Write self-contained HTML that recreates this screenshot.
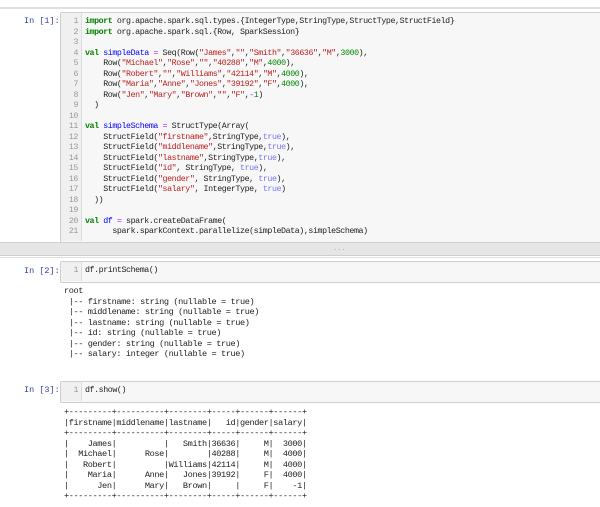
<!DOCTYPE html>
<html><head><meta charset="utf-8"><style>
body{margin:0;width:600px;height:507px;background:#fff;position:relative;overflow:hidden;font-family:"DejaVu Sans Mono","Liberation Mono",monospace;}
.a{position:absolute}
pre{margin:0;font-family:"Liberation Mono",monospace;font-size:8.3px;letter-spacing:-0.42px;line-height:10.5px;color:#222;}
pre.out{font-size:8.6px;letter-spacing:-0.4px}
.p{color:#303F9F;font-size:8.5px;font-family:"Liberation Mono",monospace}
.box{background:#f7f7f7;border:1px solid #cfcfcf;border-radius:2px}
.g{background:#f0f0f0;border-right:1px solid #ddd}
.k{color:#008000;font-weight:bold}.s{color:#BA2121}.n{color:#080}.v{color:#0000ff}.o{color:#AA22FF}.t{color:#7777ee}
.ln{color:#999;text-align:right}
</style></head><body>
<div class="a" style="left:0;top:7px;width:600px;height:2px;background:#e0e0e0"></div>
<div class="a p" style="left:24px;top:16px">In [1]:</div>
<div class="a box" style="left:60px;top:12px;width:545px;height:229px"></div>
<div class="a g" style="left:61px;top:13px;width:20px;height:228px"></div>
<pre class="a ln" style="left:61px;top:17px;width:17px">1
2
3
4
5
6
7
8
9
10
11
12
13
14
15
16
17
18
19
20
21</pre>
<pre class="a" style="left:85px;top:17px"><span class="k">import</span> org.apache.spark.sql.types.{IntegerType,StringType,StructType,StructField}
<span class="k">import</span> org.apache.spark.sql.{Row, SparkSession}

<span class="k">val</span> <span class="v">simpleData</span> <span class="o">=</span> Seq(Row(<span class="s">"James"</span>,<span class="s">""</span>,<span class="s">"Smith"</span>,<span class="s">"36636"</span>,<span class="s">"M"</span>,<span class="n">3000</span>),
    Row(<span class="s">"Michael"</span>,<span class="s">"Rose"</span>,<span class="s">""</span>,<span class="s">"40288"</span>,<span class="s">"M"</span>,<span class="n">4000</span>),
    Row(<span class="s">"Robert"</span>,<span class="s">""</span>,<span class="s">"Williams"</span>,<span class="s">"42114"</span>,<span class="s">"M"</span>,<span class="n">4000</span>),
    Row(<span class="s">"Maria"</span>,<span class="s">"Anne"</span>,<span class="s">"Jones"</span>,<span class="s">"39192"</span>,<span class="s">"F"</span>,<span class="n">4000</span>),
    Row(<span class="s">"Jen"</span>,<span class="s">"Mary"</span>,<span class="s">"Brown"</span>,<span class="s">""</span>,<span class="s">"F"</span>,<span class="o">-</span><span class="n">1</span>)
  )

<span class="k">val</span> <span class="v">simpleSchema</span> <span class="o">=</span> StructType(Array(
    StructField(<span class="s">"firstname"</span>,StringType,<span class="t">true</span>),
    StructField(<span class="s">"middlename"</span>,StringType,<span class="t">true</span>),
    StructField(<span class="s">"lastname"</span>,StringType,<span class="t">true</span>),
    StructField(<span class="s">"id"</span>, StringType, <span class="t">true</span>),
    StructField(<span class="s">"gender"</span>, StringType, <span class="t">true</span>),
    StructField(<span class="s">"salary"</span>, IntegerType, <span class="t">true</span>)
  ))

<span class="k">val</span> <span class="v">df</span> <span class="o">=</span> spark.createDataFrame(
      spark.sparkContext.parallelize(simpleData),simpleSchema)</pre>
<div class="a" style="left:0;top:242px;width:600px;height:12px;background:#e6e6e6;border-top:1px solid #cfcfcf;border-bottom:1px solid #cfcfcf"></div>
<div class="a" style="left:333px;top:244px;font-size:7px;color:#aaa">...</div>
<div class="a" style="left:0;top:257px;width:600px;height:1px;background:#e0e0e0"></div>
<div class="a p" style="left:24px;top:266px">In [2]:</div>
<div class="a box" style="left:60px;top:261px;width:545px;height:20px"></div>
<div class="a g" style="left:61px;top:262px;width:20px;height:19px"></div>
<pre class="a ln" style="left:61px;top:266px;width:17px">1</pre>
<pre class="a" style="left:85px;top:266px">df.printSchema()</pre>
<pre class="a out" style="left:64px;top:286px">root
 |-- firstname: string (nullable = true)
 |-- middlename: string (nullable = true)
 |-- lastname: string (nullable = true)
 |-- id: string (nullable = true)
 |-- gender: string (nullable = true)
 |-- salary: integer (nullable = true)</pre>
<div class="a p" style="left:24px;top:385px">In [3]:</div>
<div class="a box" style="left:60px;top:381px;width:545px;height:20px"></div>
<div class="a g" style="left:61px;top:382px;width:20px;height:19px"></div>
<pre class="a ln" style="left:61px;top:386px;width:17px">1</pre>
<pre class="a" style="left:85px;top:386px">df.show()</pre>
<pre class="a out" style="left:64px;top:407px">+---------+----------+--------+-----+------+------+
|firstname|middlename|lastname|   id|gender|salary|
+---------+----------+--------+-----+------+------+
|    James|          |   Smith|36636|     M|  3000|
|  Michael|      Rose|        |40288|     M|  4000|
|   Robert|          |Williams|42114|     M|  4000|
|    Maria|      Anne|   Jones|39192|     F|  4000|
|      Jen|      Mary|   Brown|     |     F|    -1|
+---------+----------+--------+-----+------+------+</pre>
</body></html>
